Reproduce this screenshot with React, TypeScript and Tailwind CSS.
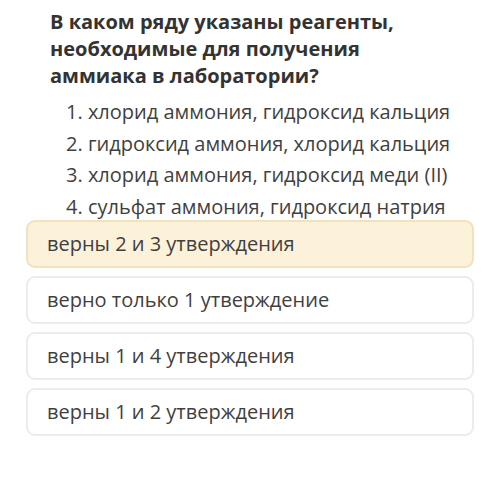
import React from 'react';

const statements = [
  '1. хлорид аммония, гидроксид кальция',
  '2. гидроксид аммония, хлорид кальция',
  '3. хлорид аммония, гидроксид меди (II)',
  '4. сульфат аммония, гидроксид натрия',
];

const options = [
  { text: 'верны 2 и 3 утверждения', selected: true },
  { text: 'верно только 1 утверждение', selected: false },
  { text: 'верны 1 и 4 утверждения', selected: false },
  { text: 'верны 1 и 2 утверждения', selected: false },
];

export default function App() {
  return (
    <div
      className="w-[500px] h-[486px] bg-white text-[#3b3b3b] overflow-hidden"
      style={{ fontFamily: '"Open Sans", "Noto Sans", sans-serif' }}
    >
      {/* Question */}
      <h1 className="pl-[50px] pt-[8px] pr-4 text-[20px] leading-[27px] font-bold text-[#333333]">
        В каком ряду указаны реагенты,
        <br />
        необходимые для получения
        <br />
        аммиака в лаборатории?
      </h1>

      {/* Statements */}
      <div className="pl-[66px] pt-[7px] flex flex-col">
        {statements.map((s) => (
          <p key={s} className="text-[20px] leading-[31.5px] text-[#3f3f3f]">
            {s}
          </p>
        ))}
      </div>

      {/* Answers */}
      <div className="px-[26px] mt-[-2px] flex flex-col gap-[8px]">
        {options.map((o) => (
          <div
            key={o.text}
            className={
              o.selected
                ? 'h-[48px] flex items-center pl-[19px] rounded-[9px] border-2 border-[#f1e2bd] bg-[#fcf1d9] text-[20px] text-[#3f3f3f]'
                : 'h-[48px] flex items-center pl-[19px] rounded-[9px] border-2 border-[#ececec] bg-white text-[20px] text-[#3f3f3f]'
            }
          >
            {o.text}
          </div>
        ))}
      </div>
    </div>
  );
}
